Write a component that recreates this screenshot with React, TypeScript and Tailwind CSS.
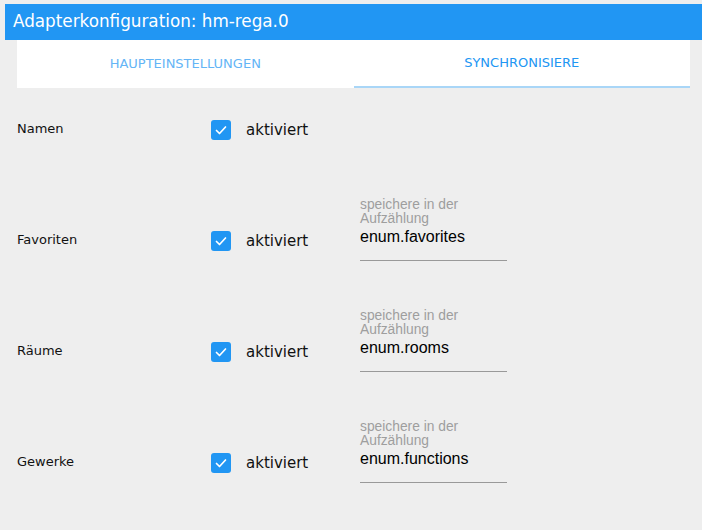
const ROWS = [
  { label: 'Namen', field: null },
  { label: 'Favoriten', field: 'enum.favorites' },
  { label: 'Räume', field: 'enum.rooms' },
  { label: 'Gewerke', field: 'enum.functions' },
];

function CheckBox() {
  return (
    <span className="flex h-5 w-5 items-center justify-center rounded-[3px] bg-[#2196f3]">
      <svg viewBox="0 0 20 20" className="h-5 w-5" fill="none" stroke="white" strokeWidth="1.7" strokeLinecap="round" strokeLinejoin="round">
        <path d="M5.5 10.5l3 3 6-6.5" />
      </svg>
    </span>
  );
}

export default function App() {
  return (
    <div className="h-[530px] w-[702px] overflow-hidden bg-[#eeeeee] pt-1 font-['DejaVu_Sans',sans-serif]">
      {/* Title bar */}
      <div className="ml-[5px] flex h-9 items-center bg-[#2196f3] pl-2 text-[16.8px] text-white">
        Adapterkonfiguration: hm-rega.0
      </div>

      {/* Tabs */}
      <div className="ml-[17px] mr-3 flex h-12 bg-white text-[13px]">
        <div className="flex flex-1 items-center justify-center text-[#64b5f6]">HAUPTEINSTELLUNGEN</div>
        <div className="flex flex-1 flex-col">
          <div className="flex flex-1 items-center justify-center text-[#2196f3]">SYNCHRONISIERE</div>
          <div className="h-[2px] bg-[#a9d6f7]" />
        </div>
      </div>

      {/* Rows */}
      <div className="-mt-px flex flex-col gap-[27px] pl-[17px]">
        {ROWS.map((r) => (
          <div key={r.label} className="flex h-[84px] items-center">
            <div className="w-[194px] text-[13px] text-[#111]">{r.label}</div>
            <div className="flex w-[149px] items-center gap-[15px] pt-[2px]">
              <CheckBox />
              <span className="pt-[1px] text-[15px] text-[#111]">aktiviert</span>
            </div>
            {r.field && (
              <div className="mb-[21px] flex w-[147px] flex-col font-['Liberation_Sans',sans-serif]">
                <div className="text-[13.8px] leading-[14px] text-[#9e9e9e]">
                  speichere in der
                  <br />
                  Aufzählung
                </div>
                <div className="mt-[2px] h-[32px] text-[16px] leading-[18px] text-black">{r.field}</div>
                <div className="h-px bg-[#999]" />
              </div>
            )}
          </div>
        ))}
      </div>
    </div>
  );
}
